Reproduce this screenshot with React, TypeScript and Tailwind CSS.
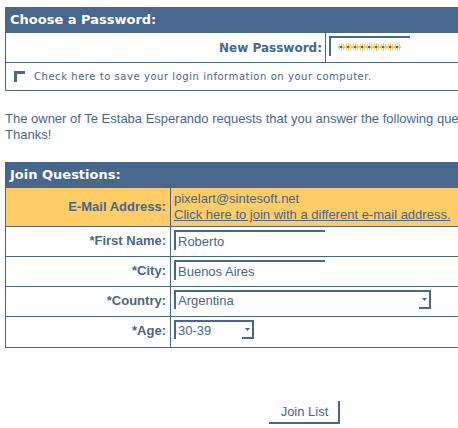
import React from "react";

const blue = "#48678c";

function Star() {
  return (
    <svg width="7" height="8" viewBox="0 0 7 8" className="block">
      <rect x="3" y="0" width="1" height="8" fill="#f7c35c" />
      <rect x="0" y="3" width="7" height="2" fill="#f7c35c" />
      <rect x="1" y="1" width="1" height="2" fill="#f7c35c" />
      <rect x="5" y="1" width="1" height="2" fill="#f7c35c" />
      <rect x="1" y="5" width="1" height="2" fill="#f7c35c" />
      <rect x="5" y="5" width="1" height="2" fill="#f7c35c" />
      <rect x="2" y="3" width="2" height="2" fill={blue} />
    </svg>
  );
}

function TextBox({ value, width }: { value: string; width: string }) {
  return (
    <div className={`${width} h-[20px] border-t-2 border-l-2 border-[#48678c] pl-[2px] flex items-center text-[13px] leading-none text-[#48678c]`}>
      {value}
    </div>
  );
}

function SelectBox({ value, width }: { value: string; width: string }) {
  return (
    <div className={`${width} h-[19px] flex border-t-2 border-l-2 border-[#48678c]`}>
      <div className="flex-1 pl-[2px] flex items-center text-[13px] leading-none text-[#48678c]">{value}</div>
      <div className="w-[12px] h-full flex items-start justify-end">
        <div className="w-[12px] h-[17px] border-r-2 border-b-2 border-[#48678c] flex items-center justify-center">
          <svg width="5" height="3" viewBox="0 0 5 3"><path d="M0 0h5L2.5 3z" fill={blue} /></svg>
        </div>
      </div>
    </div>
  );
}

const rows = [
  { label: "*First Name:", field: <TextBox value="Roberto" width="w-[151px]" /> },
  { label: "*City:", field: <TextBox value="Buenos Aires" width="w-[151px]" /> },
  { label: "*Country:", field: <SelectBox value="Argentina" width="w-[257px]" /> },
  { label: "*Age:", field: <SelectBox value="30-39" width="w-[80px]" /> },
];

export default function App() {
  return (
    <div className="w-[458px] h-[428px] overflow-hidden bg-white" style={{ fontFamily: '"Liberation Sans", Arial, sans-serif' }}>
      <div className="w-[600px] pl-[5px] pt-[7px] text-[#48678c]">
        {/* password section */}
        <div className="border-l border-b border-[#48678c]">
          <div className="h-[26px] bg-[#48678c] text-white font-bold text-[13px] pl-[4px] flex items-center" style={{ fontFamily: '"DejaVu Sans", Verdana, sans-serif' }}>
            Choose a Password:
          </div>
          <div className="h-[30px] flex border-b border-[#48678c]">
            <div className="w-[320px] border-r border-[#48678c] flex items-center justify-end pr-[3px] font-bold text-[12px]" style={{ fontFamily: '"DejaVu Sans", Verdana, sans-serif' }}>
              New Password:
            </div>
            <div className="pl-[3px] pt-[3px]">
              <div className="w-[81px] h-[20px] border-t-2 border-l-2 border-[#48678c] flex items-center pl-[7px]">
                {Array.from({ length: 9 }).map((_, i) => (
                  <Star key={i} />
                ))}
              </div>
            </div>
          </div>
          <div className="h-[27px] flex items-center pl-[8px] gap-[9px]">
            <div className="w-[11px] h-[11px] border-t-[3px] border-l-[3px] border-[#48678c]" />
            <span className="text-[10px] tracking-[0.55px]" style={{ fontFamily: '"DejaVu Sans", Verdana, sans-serif' }}>
              Check here to save your login information on your computer.
            </span>
          </div>
        </div>

        <p className="mt-[20px] text-[13px] leading-[16px] whitespace-nowrap text-[#48678c]">
          The owner of Te Estaba Esperando requests that you answer the following questions.
          <br />
          Thanks!
        </p>

        {/* join questions */}
        <div className="mt-[19px] border-l border-b border-[#48678c]">
          <div className="h-[26px] bg-[#48678c] text-white font-bold text-[13px] pl-[4px] flex items-center" style={{ fontFamily: '"DejaVu Sans", Verdana, sans-serif' }}>
            Join Questions:
          </div>
          <div className="h-[39px] flex bg-[#ffcc66] border-b border-[#48678c]">
            <div className="w-[165px] border-r border-[#48678c] flex items-center justify-end pr-[4px] font-bold text-[13px]">
              E-Mail Address:
            </div>
            <div className="pl-[3px] flex flex-col justify-center text-[13px] leading-[16px]">
              <span>pixelart@sintesoft.net</span>
              <span className="underline">Click here to join with a different e-mail address.</span>
            </div>
          </div>
          {rows.map((r, i) => (
            <div key={r.label} className={`flex h-[30px] ${i < rows.length - 1 ? "border-b border-[#48678c]" : ""}`}>
              <div className="w-[165px] border-r border-[#48678c] flex items-start pt-[4px] justify-end pr-[4px] font-bold text-[13px]">
                {r.label}
              </div>
              <div className="pl-[3px] pt-[3px]">{r.field}</div>
            </div>
          ))}
        </div>

        <div className="mt-[53px] pl-[264px]">
          <button className="w-[71px] h-[23px] border-r-2 border-b-2 border-[#48678c] bg-white text-[13px] text-[#48678c] flex items-center justify-center pl-[2px]">
            Join List
          </button>
        </div>
      </div>
    </div>
  );
}
